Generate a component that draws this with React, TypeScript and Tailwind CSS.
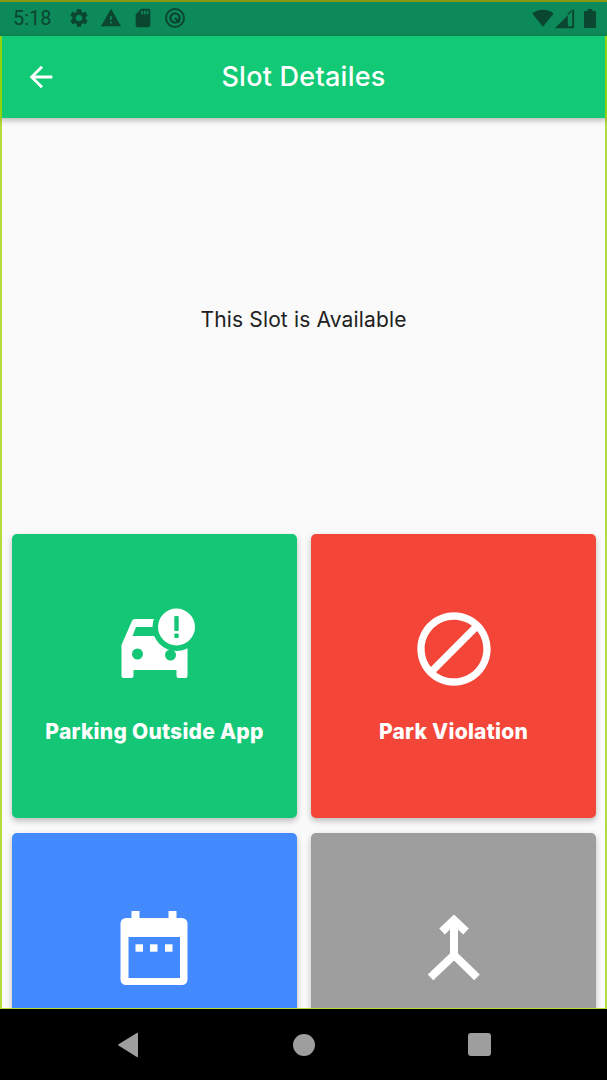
const App = () => {
    return (
        <div className="w-[607px] h-[1080px] flex flex-col overflow-hidden bg-black font-['Inter','Open_Sans',sans-serif]">
            {/* Status bar */}
            <div className="h-9 shrink-0 flex items-center bg-[#0d8a59] border-t-2 border-[#8a9a10] pb-[2px] pl-[13px] pr-[11px] text-[#0b4630]">
                <span className="w-[39px] text-[20px] leading-none font-['Roboto',sans-serif]">5:18</span>
                <div className="flex items-center ml-[16px] gap-[10px]">
                    <svg width="22" height="22" viewBox="0 0 24 24" fill="currentColor">
                        <path d="M19.14 12.94c.04-.3.06-.61.06-.94 0-.32-.02-.64-.07-.94l2.03-1.58c.18-.14.23-.41.12-.61l-1.92-3.32c-.12-.22-.37-.29-.59-.22l-2.39.96c-.5-.38-1.03-.7-1.62-.94l-.36-2.54c-.04-.24-.24-.41-.48-.41h-3.84c-.24 0-.43.17-.47.41l-.36 2.54c-.59.24-1.13.57-1.62.94l-2.39-.96c-.22-.08-.47 0-.59.22L2.74 8.87c-.12.21-.08.47.12.61l2.03 1.58c-.05.3-.09.63-.09.94s.02.64.07.94l-2.03 1.58c-.18.14-.23.41-.12.61l1.92 3.32c.12.22.37.29.59.22l2.39-.96c.5.38 1.03.7 1.62.94l.36 2.54c.05.24.24.41.48.41h3.84c.24 0 .44-.17.47-.41l.36-2.54c.59-.24 1.13-.56 1.62-.94l2.39.96c.22.08.47 0 .59-.22l1.92-3.32c.12-.22.07-.47-.12-.61l-2.01-1.58zM12 15.6c-1.98 0-3.6-1.62-3.6-3.6s1.62-3.6 3.6-3.6 3.6 1.62 3.6 3.6-1.62 3.6-3.6 3.6z" />
                    </svg>
                    <svg width="22" height="22" viewBox="0 0 24 24" fill="currentColor">
                        <path d="M1 21h22L12 2 1 21zm12-3h-2v-2h2v2zm0-4h-2v-4h2v4z" />
                    </svg>
                    <svg width="22" height="22" viewBox="0 0 24 24" fill="currentColor">
                        <path d="M18 2h-8L4.02 8 4 20c0 1.1.9 2 2 2h12c1.1 0 2-.9 2-2V4c0-1.1-.9-2-2-2zm-6 6h-2V4h2v4zm3 0h-2V4h2v4zm3 0h-2V4h2v4z" />
                    </svg>
                    <svg width="22" height="22" viewBox="0 0 22 22" fill="none" stroke="currentColor">
                        <circle cx="11" cy="11" r="9" strokeWidth="2" />
                        <circle cx="11" cy="11" r="4.6" strokeWidth="2.4" />
                        <path d="M11 11l4.5 4.5" strokeWidth="2.4" />
                    </svg>
                </div>
                <div className="flex items-center ml-auto">
                    <svg width="22" height="22" viewBox="0 0 24 24" fill="currentColor">
                        <path d="M12.01 21.49L23.64 7c-.45-.34-4.93-4-11.64-4C5.28 3 .81 6.66.36 7l11.63 14.49.01.01.01-.01z" />
                    </svg>
                    <svg width="21" height="21" viewBox="0 0 24 24" fill="currentColor">
                        <path fillRule="evenodd" d="M1 23h22V1zM20.800 20.800h-5V6.200l5-4.600z" />
                    </svg>
                    <svg className="ml-[9px]" width="12" height="19" viewBox="7 2 10 20" preserveAspectRatio="none" fill="currentColor">
                        <path d="M15.67 4H14V2h-4v2H8.33C7.6 4 7 4.6 7 5.33v15.33C7 21.4 7.6 22 8.33 22h7.33c.74 0 1.34-.6 1.34-1.33V5.33C17 4.6 16.4 4 15.67 4z" />
                    </svg>
                </div>
            </div>

            {/* App bar */}
            <div className="h-[82px] shrink-0 flex items-center justify-between bg-[#12c975] border-l-2 border-r-2 border-[#8fd40f] pl-[22px] pr-[56px] shadow-[0_2px_6px_rgba(0,0,0,0.3)] relative z-10">
                <svg width="34" height="34" viewBox="0 0 24 24" fill="white">
                    <path d="M20 11H7.830l5.590-5.590L12 4l-8 8 8 8 1.410-1.410L7.830 13H20v-2z" />
                </svg>
                <h1 className="text-[27px] tracking-[0.25px] font-medium text-white">Slot Detailes</h1>
                <span className="w-0" />
            </div>

            {/* Body */}
            <div className="h-[891px] shrink-0 bg-[#fafafa] border-l-2 border-r-2 border-b border-[#b5dc3c] overflow-hidden">
                <div className="h-[403px] flex items-center justify-center text-[21px] tracking-[0.15px] text-[#212121]">
                    This Slot is Available
                </div>
                <div className="grid grid-cols-[285px_285px] gap-x-[14px] gap-y-[15px] pl-[10px] pt-[13px]">
                    {/* Parking Outside App */}
                    <div className="h-[284px] rounded-[5px] bg-[#14c776] shadow-[0_3px_6px_rgba(0,0,0,0.25)] flex flex-col items-center pt-[71px]">
                        <svg width="88" height="88" viewBox="21.5 15 88 88" fill="white">
                            <path d="M46 29h36l16 26v31a2 2 0 0 1-2 2h-7a2 2 0 0 1-2-2v-6H44v6a2 2 0 0 1-2 2h-8a2 2 0 0 1-2-2V55l10-23a4 4 0 0 1 4-3z" />
                            <path fill="#14c776" d="M43 46l3.500-9h30v9z" />
                            <circle fill="#14c776" cx="48" cy="64" r="5.500" />
                            <circle fill="#14c776" cx="81" cy="65" r="5.500" />
                            <circle fill="#14c776" cx="87" cy="37" r="24" />
                            <circle cx="87" cy="37" r="18.500" />
                            <rect fill="#14c776" x="84.800" y="26" width="4.400" height="15" rx="1" />
                            <rect fill="#14c776" x="84.800" y="43.500" width="4.400" height="4.500" rx="1" />
                        </svg>
                        <span className="mt-[24px] text-[21px] tracking-[0.25px] leading-[30px] font-extrabold text-white">Parking Outside App</span>
                    </div>

                    {/* Park Violation */}
                    <div className="h-[284px] rounded-[5px] bg-[#f44539] shadow-[0_3px_6px_rgba(0,0,0,0.25)] flex flex-col items-center pt-[71px]">
                        <svg width="88" height="88" viewBox="0 0 24 24" fill="white">
                            <path d="M12 2C6.480 2 2 6.480 2 12s4.480 10 10 10 10-4.480 10-10S17.520 2 12 2zM4 12c0-4.420 3.580-8 8-8 1.850 0 3.550.63 4.900 1.690L5.690 16.900C4.630 15.550 4 13.850 4 12zm8 8c-1.850 0-3.550-.63-4.900-1.690L18.310 7.100C19.370 8.450 20 10.150 20 12c0 4.420-3.580 8-8 8z" />
                        </svg>
                        <span className="mt-[24px] text-[21px] tracking-[0.25px] leading-[30px] font-extrabold text-white">Park Violation</span>
                    </div>

                    {/* Calendar card, cut off by the nav bar */}
                    <div className="h-[284px] rounded-[5px] bg-[#448aff] shadow-[0_3px_6px_rgba(0,0,0,0.25)] flex flex-col items-center pt-[71px]">
                        <svg width="88" height="88" viewBox="1 -1 88 88" fill="white">
                            <path fillRule="evenodd" d="M21.500 13V6h8v7h29V6h8v7H72a5.500 5.500 0 0 1 5.500 5.500v56A5.500 5.500 0 0 1 72 80H16a5.500 5.500 0 0 1-5.500-5.500v-56A5.500 5.500 0 0 1 16 13zM18.500 32v41H70V32z" />
                            <rect x="25.500" y="39.300" width="7.500" height="7.400" />
                            <rect x="40" y="39.300" width="7.500" height="7.400" />
                            <rect x="55" y="39.300" width="7.500" height="7.400" />
                        </svg>
                    </div>

                    {/* Merge card, cut off by the nav bar */}
                    <div className="h-[284px] rounded-[5px] bg-[#9e9e9e] shadow-[0_3px_6px_rgba(0,0,0,0.25)] flex flex-col items-center pt-[71px]">
                        <svg width="88" height="88" viewBox="0 0 88 88" fill="none" stroke="white" strokeWidth="8">
                            <path d="M32 27.500l12-11.500 12 11.500" />
                            <path d="M44 17v33" />
                            <path d="M20.500 73.300L44 51l23 22.300" />
                        </svg>
                    </div>
                </div>
            </div>

            {/* Nav bar */}
            <div className="flex-1 bg-black flex items-center justify-center text-[#9e9e9e]">
                <div className="flex items-center gap-[153px]">
                    <svg width="24" height="26" viewBox="0 0 24 26" fill="currentColor">
                        <path d="M22 1.500v23a.8.8 0 0 1-1.200.6L2.500 13.600a.8.8 0 0 1 0-1.300L20.800 .9A.8.8 0 0 1 22 1.500z" />
                    </svg>
                    <div className="w-[22px] h-[22px] rounded-full bg-[#9e9e9e]" />
                    <div className="w-[23px] h-[23px] rounded-[3px] bg-[#9e9e9e]" />
                </div>
            </div>
        </div>
    );
};

export default App;
